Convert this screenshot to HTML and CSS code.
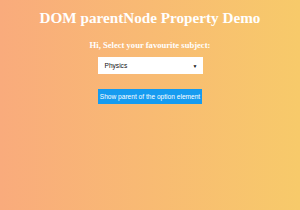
FILE: index.html
```html
<!DOCTYPE html>
<html>
<head>
<meta charset="utf-8">
<link rel="stylesheet" href="styles.css">
</head>
<body>
<div class="page">
  <h1 class="title">DOM parentNode Property Demo</h1>
  <h3 class="subtitle">Hi, Select your favourite subject:</h3>
  <div class="select">
    <span class="select-text">Physics</span>
    <span class="arrow">&#9660;</span>
  </div>
  <button class="btn">Show parent of the option element</button>
</div>
</body>
</html>
```
FILE: styles.css
```css
html, body {
  margin: 0;
  padding: 0;
  width: 300px;
  height: 210px;
}
body {
  background: linear-gradient(to right, #f9ab7c, #f7ca6a);
  overflow: hidden;
}
.page {
  display: flex;
  flex-direction: column;
  align-items: center;
  padding-top: 9px;
}
.title {
  margin: 0;
  font-family: "Liberation Serif", serif;
  font-weight: bold;
  font-size: 15.2px;
  line-height: 18px;
  color: #fff;
}
.subtitle {
  margin: 13px 0 0;
  font-family: "Liberation Serif", serif;
  font-weight: bold;
  font-size: 8.6px;
  line-height: 10px;
  color: #fff;
}
.select {
  margin-top: 7px;
  width: 105px;
  height: 17px;
  box-sizing: border-box;
  background: #fff;
  display: flex;
  align-items: center;
  justify-content: space-between;
  padding: 0 5px 0 7px;
  font-family: "Liberation Sans", Arial, sans-serif;
  font-size: 6.6px;
  color: #111;
}
.arrow {
  font-size: 5px;
}
.btn {
  margin-top: 15px;
  width: 104px;
  height: 15px;
  border: none;
  padding: 0;
  background: #159bf0;
  color: #fff;
  font-family: "Liberation Sans", Arial, sans-serif;
  font-size: 6.6px;
}
```
